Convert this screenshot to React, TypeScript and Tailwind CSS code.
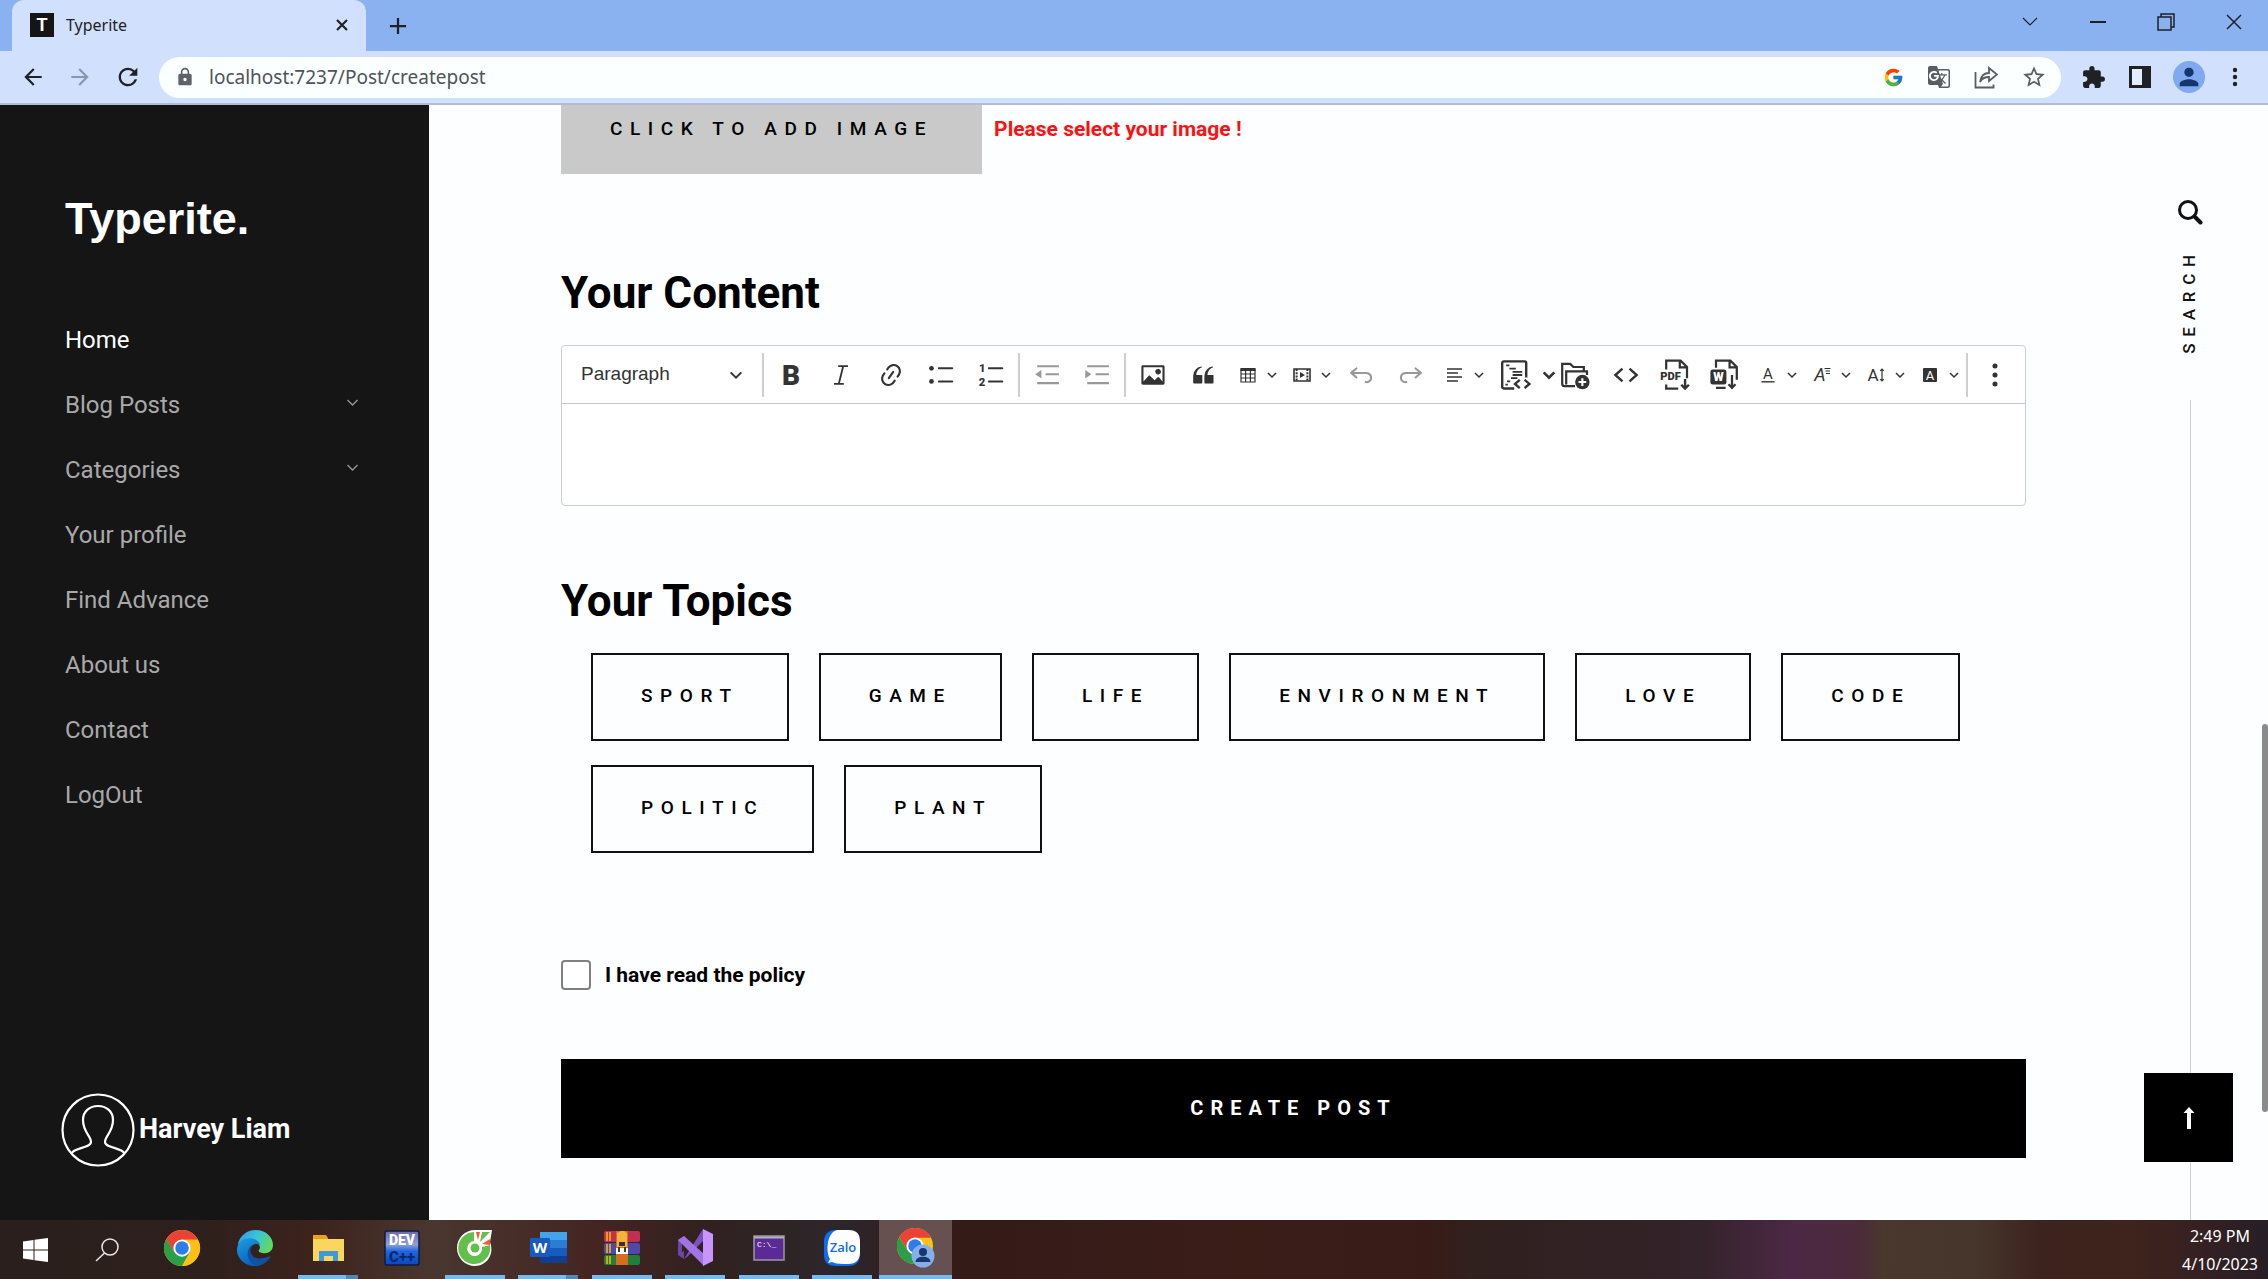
import React from "react";
import { FcGoogle } from "react-icons/fc";
import { MdArrowBack, MdArrowForward, MdExtension, MdGTranslate, MdLock, MdPerson, MdRefresh, MdStarBorder } from "react-icons/md";

type SvgProps = { size?: number; children: React.ReactNode; box?: string };

const Svg = ({ size = 28, box = "0 0 20 20", children }: SvgProps) => (
  <svg width={size} height={size} viewBox={box} fill="currentColor" aria-hidden="true" className="shrink-0 overflow-visible">
    {children}
  </svg>
);

const Chevron = ({ size = 12, width = 2 }: { size?: number; width?: number }) => (
  <svg width={size} height={size} viewBox="0 0 12 12" fill="none" stroke="currentColor" strokeWidth={width} aria-hidden="true" className="shrink-0">
    <path d="M2 4l4 4 4-4" />
  </svg>
);

/* ---------- editor toolbar icons ---------- */

const BoldIcon = () => (
  <Svg>
    <text x="10" y="17" textAnchor="middle" fontSize="20" fontWeight="900" fontFamily="Roboto, sans-serif">B</text>
  </Svg>
);
const ItalicIcon = () => (
  <Svg>
    <path d="M8 3.6h7M5 16.4h7M11.6 3.6L8.4 16.4" fill="none" stroke="currentColor" strokeWidth="1.3" />
  </Svg>
);
const LinkIcon = () => (
  <Svg>
    <path d="m11.077 15 .991-1.416a.75.75 0 1 1 1.229.86l-1.148 1.64a.748.748 0 0 1-.217.206 5.251 5.251 0 0 1-8.503-5.955.741.741 0 0 1 .12-.274l1.147-1.639a.75.75 0 1 1 1.228.86L4.933 10.7l.006.003a3.75 3.75 0 0 0 6.132 4.294l.006.004zm5.494-5.335a.748.748 0 0 1-.12.274l-1.147 1.639a.75.75 0 1 1-1.228-.86l.86-1.23a3.75 3.75 0 0 0-6.144-4.301l-.86 1.229a.75.75 0 0 1-1.229-.86l1.148-1.64a.748.748 0 0 1 .217-.206 5.251 5.251 0 0 1 8.503 5.955zm-4.563-2.532a.75.75 0 0 1 .184 1.045l-3.155 4.505a.75.75 0 1 1-1.229-.86l3.155-4.506a.75.75 0 0 1 1.045-.184z" />
  </Svg>
);
const BulletsIcon = () => (
  <Svg>
    <path d="M8.5 5.2h9.5M8.5 14.6h9.5" stroke="currentColor" strokeWidth="1.5" strokeLinecap="round" />
    <circle cx="3.2" cy="5.2" r="1.7" />
    <circle cx="3.2" cy="14.6" r="1.7" />
  </Svg>
);
const NumbersIcon = () => (
  <Svg>
    <path d="M8.5 5.2h9.5M8.5 14.6h9.5" stroke="currentColor" strokeWidth="1.5" strokeLinecap="round" />
    <text x="1.5" y="7.9" fontSize="8" fontWeight="900" fontFamily="Roboto, sans-serif">1</text>
    <text x="1.2" y="17.6" fontSize="8" fontWeight="900" fontFamily="Roboto, sans-serif">2</text>
  </Svg>
);
const OutdentIcon = () => (
  <Svg>
    <path d="M3 3.8h15.5M9 9.5h9.5M3 15.8h15.5" stroke="currentColor" strokeWidth="1.5" />
    <path d="M6 6.5v6L1.6 9.5z" />
  </Svg>
);
const IndentIcon = () => (
  <Svg>
    <path d="M3 3.8h15.5M9 9.5h9.5M3 15.8h15.5" stroke="currentColor" strokeWidth="1.5" />
    <path d="M1.6 6.5v6L6 9.5z" />
  </Svg>
);
const ImageIcon = () => (
  <Svg>
    <path d="M6.91 10.54c.26-.23.64-.21.88.03l3.36 3.14 2.23-2.06a.64.64 0 0 1 .87 0l2.52 2.97V4.5H3.2v10.12l3.71-4.08zm10.27-7.51c.6 0 1.09.47 1.09 1.05v11.84c0 .59-.49 1.06-1.09 1.06H2.79c-.6 0-1.09-.47-1.09-1.06V4.08c0-.58.49-1.05 1.1-1.05h14.38zm-5.22 5.56a1.96 1.96 0 1 1 3.4-1.96 1.96 1.96 0 0 1-3.4 1.96z" />
  </Svg>
);
const QuoteIcon = () => (
  <Svg>
    <path d="M3 10.423a6.5 6.5 0 0 1 6.056-6.408l.038.67C6.448 5.423 5.354 7.663 5.22 10H9c.552 0 .5.432.5.986v4.511c0 .554-.448.503-1 .503h-5c-.552 0-.5-.449-.5-1.003v-4.574zm8 0a6.5 6.5 0 0 1 6.056-6.408l.038.67c-2.646.739-3.74 2.979-3.873 5.315H17c.552 0 .5.432.5.986v4.511c0 .554-.448.503-1 .503h-5c-.552 0-.5-.449-.5-1.003v-4.574z" />
  </Svg>
);
const TableIcon = () => (
  <Svg size={20}>
    <path d="M3 5h14v12H3zM3 9h14M3 13h14M7.6 5v12M12.4 5v12" fill="none" stroke="currentColor" strokeWidth="1.2" />
    <path d="M2.4 3h15.2v3H2.4z" />
  </Svg>
);
const MediaIcon = () => (
  <Svg size={20}>
    <path d="M2 4h16v12H2z" fill="none" stroke="currentColor" strokeWidth="1.6" />
    <path d="M4.6 4v12M15.4 4v12" stroke="currentColor" strokeWidth="2" strokeDasharray="2 1.2" />
    <path d="M8 7v6l5-3z" />
  </Svg>
);
const undoPath =
  "m5.042 9.367 2.189 1.837a.75.75 0 0 1-.965 1.149l-3.788-3.18a.747.747 0 0 1-.21-.284.75.75 0 0 1 .17-.945L6.23 4.762a.75.75 0 1 1 .964 1.15L4.863 7.866h8.917A.75.75 0 0 1 14 7.9a4 4 0 1 1-1.477 7.718l.344-1.489a2.5 2.5 0 1 0 1.094-4.73l.008-.032H5.042z";
const UndoIcon = () => (
  <Svg>
    <path d={undoPath} />
  </Svg>
);
const RedoIcon = () => (
  <Svg>
    <path d={undoPath} transform="matrix(-1 0 0 1 20 0)" />
  </Svg>
);
const AlignIcon = () => (
  <Svg size={20}>
    <path d="M2 4h15M2 8h11M2 12h15M2 16h11" stroke="currentColor" strokeWidth="1.5" />
  </Svg>
);
const TemplateIcon = () => (
  <Svg size={32}>
    <path d="M9.5 18.4H3a1 1 0 0 1-1-1V2.500a1 1 0 0 1 1-1h13a1 1 0 0 1 1 1v9" fill="none" stroke="currentColor" strokeWidth="1.5" />
    <path d="M4.500 4h2M6.500 6h4M8.500 8h6M8.500 10h6M7.500 12h4M5 14h2M4 16h1.500" stroke="currentColor" strokeWidth="1.100" />
    <path d="M13 13l-3 2.600 3 2.600M16 13l3 2.600-3 2.600" fill="none" stroke="currentColor" strokeWidth="1.500" />
  </Svg>
);
const FolderPlusIcon = () => (
  <Svg size={32}>
    <path d="M10 17H3.500A1.500 1.500 0 0 1 2 15.500V3h5l2 2h6.500v3M4.500 16V7.700H17.500V10" fill="none" stroke="currentColor" strokeWidth="1.400" />
    <circle cx="14.600" cy="14.400" r="4.500" />
    <path d="M14.600 12v4.800M12.200 14.400H17" stroke="#fff" strokeWidth="1.300" />
  </Svg>
);
const SourceIcon = () => (
  <Svg>
    <path d="M7.500 5.500L2.400 10l5.100 4.500M12.500 5.500l5.100 4.500-5.100 4.500" fill="none" stroke="currentColor" strokeWidth="1.700" />
  </Svg>
);
const PdfIcon = () => (
  <Svg size={32}>
    <path d="M4.500 6.500V1h9l4 4V12M13 1.200v4h4.500M4.500 16v2.500h7.500" fill="none" stroke="currentColor" strokeWidth="1.400" />
    <path d="M16.300 12.500v6M13.900 16.100l2.400 2.400 2.400-2.400" fill="none" stroke="currentColor" strokeWidth="1.500" />
    <text x="0.800" y="13.200" fontSize="7" fontWeight="900" fontFamily="Roboto, sans-serif">PDF</text>
  </Svg>
);
const WordIcon = () => (
  <Svg size={32}>
    <path d="M5 5.500V1h9l4 4V13M13.500 1.200v4H18M5 18h6" fill="none" stroke="currentColor" strokeWidth="1.400" />
    <path d="M15 10v8M12.800 15.800L15 18l2.200-2.200" fill="none" stroke="currentColor" strokeWidth="1.400" />
    <rect x="1.500" y="6.500" width="10" height="9.500" rx="1.500" />
    <text x="6.500" y="14" textAnchor="middle" fontSize="7.500" fontWeight="900" fontFamily="Roboto, sans-serif" fill="#fff">W</text>
  </Svg>
);
const FontColorIcon = () => (
  <Svg size={20}>
    <text x="10" y="13.500" textAnchor="middle" fontSize="15" fontFamily="Roboto, sans-serif">A</text>
    <path d="M3.500 16.800h13" stroke="currentColor" strokeWidth="1.400" />
  </Svg>
);
const FontFamilyIcon = () => (
  <Svg size={20}>
    <text x="8" y="16" textAnchor="middle" fontSize="18" fontStyle="italic" fontFamily="Roboto, sans-serif">A</text>
    <path d="M12.500 3.500h6M13.500 6h4.500M14 8.500h4" stroke="currentColor" strokeWidth="1.200" />
  </Svg>
);
const FontSizeIcon = () => (
  <Svg size={20}>
    <text x="7" y="16" textAnchor="middle" fontSize="17" fontFamily="Roboto, sans-serif">A</text>
    <path d="M16 5v10M14.200 5.800L16 4l1.800 1.800M14.200 14.200L16 16l1.800-1.800" fill="none" stroke="currentColor" strokeWidth="1.200" />
  </Svg>
);
const HighlightIcon = () => (
  <Svg size={20}>
    <rect x="3" y="3" width="14" height="14" rx="1" />
    <text x="10" y="14.500" textAnchor="middle" fontSize="13" fontFamily="Roboto, sans-serif" fill="#fff">A</text>
  </Svg>
);
const DotsIcon = () => (
  <Svg>
    <circle cx="10" cy="3.600" r="1.800" />
    <circle cx="10" cy="10" r="1.800" />
    <circle cx="10" cy="16.400" r="1.800" />
  </Svg>
);

const Tool = ({ label, wide, muted, children }: { label: string; wide?: boolean; muted?: boolean; children: React.ReactNode }) => (
  <button
    type="button"
    aria-label={label}
    className={`flex h-12 shrink-0 items-center justify-center ${wide ? "w-[50px]" : "w-[49px]"} ${muted ? "text-[#999]" : "text-[#333]"}`}
  >
    {children}
  </button>
);
const DropTool = ({ label, children }: { label: string; children: React.ReactNode }) => (
  <button type="button" aria-label={label} className="flex h-12 w-[54px] shrink-0 items-center gap-2 pl-[10px] text-[#333]">
    {children}
    <Chevron width={1.5} />
  </button>
);
const Separator = () => <span className="mx-[2px] h-11 w-[2px] shrink-0 bg-[#ccced1]" />;

/* ---------- taskbar icons ---------- */

const ChromeLogo = ({ size = 36 }: { size?: number }) => (
  <Svg size={size} box="0 0 48 48">
    <circle cx="24" cy="24" r="24" fill="#fbc116" />
    <path d="M3.200 12A24 24 0 0 1 44.800 12L45 13H24L13.600 30z" fill="#ea4335" />
    <path d="M3.200 12A24 24 0 0 0 24 48L34.400 30 24 24 13.600 30z" fill="#2b9e48" />
    <path d="M44.800 12A24 24 0 0 1 24 48L34.400 30 35 20 24 13H45z" fill="#fbc116" />
    <circle cx="24" cy="24" r="11.500" fill="#fff" />
    <circle cx="24" cy="24" r="9" fill="#2b7de9" />
  </Svg>
);
const EdgeLogo = () => (
  <Svg size={36} box="0 0 48 48">
    <defs>
      <linearGradient id="edgeTop" x1="0" y1="0.200" x2="1" y2="0.600">
        <stop offset="0" stopColor="#2f9be8" />
        <stop offset="0.500" stopColor="#38c6d8" />
        <stop offset="1" stopColor="#62dc55" />
      </linearGradient>
      <linearGradient id="edgeLow" x1="0" y1="0" x2="0.500" y2="1">
        <stop offset="0" stopColor="#1f9de0" />
        <stop offset="1" stopColor="#0a62c0" />
      </linearGradient>
    </defs>
    <path d="M1 20C3 8 13 0 25 0c13 0 23 9 23 20 0 7-5 11-11 11-5 0-9-2-8-4 2-2 2-4 1-6C27 13 10 10 1 20z" fill="url(#edgeTop)" />
    <path d="M0 25C1 15 9 11 17 11c7 0 13 4 14 9-3-2-8-2-11 1-7 8-2 23 10 26-2 1-4 1-6 1C10 48-1 37 0 25z" fill="url(#edgeLow)" />
    <path d="M20 19c-5 8-1 19 9 19 6 0 11-2 15-3 1 0 1 1 0 2-4 6-10 10-17 11-12-2-18-19-7-29z" fill="#0d54a0" />
  </Svg>
);
const FolderLogo = () => (
  <Svg size={34} box="0 0 34 34">
    <path d="M2 4h13l2 3v6H2z" fill="#e8a317" />
    <path d="M2 8h31v22H2z" fill="#fcd65c" />
    <path d="M8 20h19v10h-5v-5h-9v5H8z" fill="#3f97dc" />
  </Svg>
);
const DevLogo = () => (
  <Svg size={36} box="0 0 36 36">
    <defs>
      <linearGradient id="dev" x1="0" y1="0" x2="0" y2="1">
        <stop offset="0" stopColor="#6a68ae" />
        <stop offset="0.400" stopColor="#8fa0dd" />
        <stop offset="0.600" stopColor="#1f66dd" />
        <stop offset="1" stopColor="#0a47c0" />
      </linearGradient>
    </defs>
    <rect x="1" y="1" width="34" height="34" rx="2" fill="url(#dev)" stroke="#0f1c3d" strokeWidth="1.500" />
    <text x="18" y="15" textAnchor="middle" fontSize="14" fontWeight="900" fontFamily="Roboto, sans-serif" fill="#fff">DEV</text>
    <text x="18" y="32" textAnchor="middle" fontSize="15" fontWeight="900" fontFamily="Roboto, sans-serif" fill="#0b2a6b">C++</text>
  </Svg>
);
const CocCocLogo = () => (
  <Svg size={38} box="0 0 38 38">
    <path d="M36 1l-2 12c5 13-4 24-15 24C9 37 1 29 1 19S9 1 19 1z" fill="#fff" />
    <path d="M18 3a16 16 0 1 0 16 13l-8 2a7.500 7.500 0 1 1-8-6z" fill="#63bf4b" />
    <circle cx="19" cy="19" r="4.500" fill="#63bf4b" />
    <path d="M20 3h4l-2 8z" fill="#f0593e" />
    <path d="M26 3h8l-10 10z" fill="#63bf4b" />
    <path d="M26 15l8-5v6z" fill="#f0593e" />
  </Svg>
);
const WordLogo = () => (
  <Svg size={37} box="0 0 37 37">
    <path d="M10 3h27v8H10z" fill="#41a5ee" />
    <path d="M10 11h27v8H10z" fill="#2b7cd3" />
    <path d="M10 19h27v8H10z" fill="#185abd" />
    <path d="M10 27h27v7H10z" fill="#103f91" />
    <rect x="0" y="9" width="20" height="19" rx="1" fill="#185abd" />
    <text x="10" y="24" textAnchor="middle" fontSize="15" fontWeight="700" fontFamily="Open Sans, sans-serif" fill="#fff">W</text>
  </Svg>
);
const WinrarLogo = () => (
  <Svg size={36} box="0 0 36 36">
    <rect x="0" y="1" width="36" height="11" rx="2" fill="#c22f55" />
    <rect x="0" y="13" width="36" height="11" rx="2" fill="#4f49ad" />
    <rect x="0" y="25" width="36" height="10" rx="2" fill="#1f7f3c" />
    <path d="M3 2v9M6 2v9M3 14v9M6 14v9M3 26v8M6 26v8" stroke="#f2b705" strokeWidth="1.600" />
    <rect x="12" y="1" width="12" height="34" fill="#d86d20" />
    <path d="M13 3l4-2h3l3 2v14H13z" fill="#f2b33a" />
    <path d="M15 12h6v4h-6z" fill="#333" />
    <path d="M12 18h12v6H12z" fill="#fff" />
    <path d="M15 17v5M21 17v5" stroke="#5a3010" strokeWidth="2" />
  </Svg>
);
const VisualStudioLogo = () => (
  <Svg size={37} box="0 0 37 37">
    <path d="M1 11l6-4v23l-6-4z" fill="#6b46a6" />
    <path d="M5 13.500v10l5-5z" fill="#2f2324" />
    <path d="M7 30L26 0v12L10 28z" fill="#7c50c0" />
    <path d="M7 7L27 25v12L1 11z" fill="#a273e4" />
    <path d="M26 0l10 5v27l-10 5z" fill="#c795fb" />
  </Svg>
);
const TerminalLogo = () => (
  <Svg size={32} box="0 0 32 32">
    <rect x="1" y="4" width="30" height="24" fill="#5b2a97" stroke="#9a9a9a" strokeWidth="1.500" />
    <path d="M1 5.500h30" stroke="#b5b5b5" strokeWidth="2" />
    <text x="4" y="15" fontSize="8" fontFamily="Liberation Mono, monospace" fill="#fff">C:\_</text>
  </Svg>
);
const ZaloLogo = () => (
  <Svg size={38} box="0 0 38 38">
    <path d="M13 1h12c9 0 12 4 12 12v12c0 8-4 12-12 12H13C4 37 1 33 1 25V13C1 5 5 1 13 1z" fill="#0f6cf2" />
    <path d="M14 1h11c9 0 12 4 12 12v10c0 8-4 12-12 12-6 0-12 0-16-2l-4 1 2-4C3 24 3 4 14 1z" fill="#fff" />
    <text x="20" y="22.500" textAnchor="middle" fontSize="13" fontWeight="600" fontFamily="Open Sans, sans-serif" fill="#0f6cf2">Zalo</text>
  </Svg>
);
const ChromeProfileLogo = () => (
  <Svg size={40} box="0 0 40 40">
    <g transform="translate(2 0) scale(0.750)">
      <circle cx="24" cy="24" r="24" fill="#fbc116" />
      <path d="M3.200 12A24 24 0 0 1 44.800 12L45 13H24L13.600 30z" fill="#ea4335" />
      <path d="M3.200 12A24 24 0 0 0 24 48L34.400 30 24 24 13.600 30z" fill="#2b9e48" />
      <circle cx="24" cy="24" r="11.500" fill="#fff" />
      <circle cx="24" cy="24" r="9" fill="#2b7de9" />
    </g>
    <circle cx="28" cy="28" r="11.500" fill="#86aeea" />
    <circle cx="28" cy="24" r="4" fill="#17386e" />
    <path d="M20.500 34c0-7 15-7 15 0z" fill="#17386e" />
  </Svg>
);

const taskbarApps: { name: string; icon: React.ReactNode; open?: boolean; stacked?: boolean; active?: boolean }[] = [
  { name: "Chrome", icon: <ChromeLogo /> },
  { name: "Edge", icon: <EdgeLogo /> },
  { name: "File Explorer", icon: <FolderLogo />, open: true, stacked: true },
  { name: "Dev-C++", icon: <DevLogo /> },
  { name: "Coc Coc", icon: <CocCocLogo />, open: true },
  { name: "Word", icon: <WordLogo />, open: true, stacked: true },
  { name: "WinRAR", icon: <WinrarLogo />, open: true },
  { name: "Visual Studio", icon: <VisualStudioLogo />, open: true },
  { name: "Terminal", icon: <TerminalLogo />, open: true },
  { name: "Zalo", icon: <ZaloLogo />, open: true },
  { name: "Chrome profile", icon: <ChromeProfileLogo />, open: true, active: true },
];

const navItems = [
  { label: "Home", current: true },
  { label: "Blog Posts", menu: true },
  { label: "Categories", menu: true },
  { label: "Your profile" },
  { label: "Find Advance" },
  { label: "About us" },
  { label: "Contact" },
  { label: "LogOut" },
];

const topics = ["Sport", "Game", "Life", "Environment", "Love", "Code", "Politic", "Plant"];

function BrowserChrome() {
  return (
    <header className="shrink-0 font-['Noto_Sans',sans-serif] text-[#1f2124]">
      <div className="flex h-[51px] items-stretch bg-[#8ab1f0] pl-3">
        <div className="flex w-[354px] items-center rounded-t-xl bg-[#d1e1fd] pr-4 pb-[2px] pl-[18px]">
          <span className="flex size-6 items-center justify-center bg-[#151515] font-['Liberation_Sans',sans-serif] text-lg font-bold text-white">T</span>
          <span className="ml-3 flex-1 text-base">Typerite</span>
          <button type="button" aria-label="Close tab">
            <svg width="16" height="16" viewBox="0 0 16 16" stroke="currentColor" strokeWidth="2.200" aria-hidden="true">
              <path d="M3 3l10 10M13 3L3 13" />
            </svg>
          </button>
        </div>
        <button type="button" aria-label="New tab" className="ml-5 flex w-6 items-center justify-center">
          <svg width="18" height="18" viewBox="0 0 20 20" stroke="currentColor" strokeWidth="2.500" aria-hidden="true">
            <path d="M10 1v18M1 10h18" />
          </svg>
        </button>
        <div className="ml-auto flex items-center pb-2">
          <button type="button" aria-label="Search tabs" className="flex w-[68px] justify-center">
            <svg width="16" height="10" viewBox="0 0 16 10" fill="none" stroke="currentColor" strokeWidth="1.200" aria-hidden="true">
              <path d="M1 1l7 7 7-7" />
            </svg>
          </button>
          <button type="button" aria-label="Minimize" className="flex w-[68px] justify-center">
            <svg width="16" height="16" viewBox="0 0 16 16" stroke="currentColor" strokeWidth="2" aria-hidden="true">
              <path d="M0 8h16" />
            </svg>
          </button>
          <button type="button" aria-label="Restore" className="flex w-[68px] justify-center">
            <svg width="18" height="18" viewBox="0 0 18 18" fill="none" stroke="currentColor" strokeWidth="1.500" aria-hidden="true">
              <path d="M1 4h13v13H1zM4 4V1h13v13h-3" />
            </svg>
          </button>
          <button type="button" aria-label="Close window" className="flex w-[68px] justify-center">
            <svg width="16" height="16" viewBox="0 0 16 16" stroke="currentColor" strokeWidth="1.500" aria-hidden="true">
              <path d="M1 1l14 14M15 1L1 15" />
            </svg>
          </button>
        </div>
      </div>
      <div className="flex h-[54px] items-center border-b-2 border-[#aebcd6] bg-[#d1e1fd] pl-5">
        <button type="button" aria-label="Back" className="flex w-[47px]"><MdArrowBack size={26} /></button>
        <button type="button" aria-label="Forward" className="flex w-[47px] text-[#8a96ac]"><MdArrowForward size={26} /></button>
        <button type="button" aria-label="Reload" className="flex w-[45px]"><MdRefresh size={28} /></button>
        <div className="flex h-[41px] flex-1 items-center rounded-full bg-[#fbffff] pr-[14px] pl-4">
          <MdLock size={20} className="text-[#5f6368]" />
          <input aria-label="Address" defaultValue="localhost:7237/Post/createpost" className="ml-[14px] flex-1 bg-transparent text-[19px] text-[#505357] outline-none" />
          <div className="flex items-center gap-[23px] text-[#5a5d61]">
            <FcGoogle size={21} />
            <MdGTranslate size={24} />
            <svg width="24" height="24" viewBox="0 0 24 24" fill="none" stroke="currentColor" strokeWidth="1.800" aria-hidden="true">
              <path d="M1.500 7v15.500h18v-3" />
              <path d="M6 17c1-7 4-9 9-9V3l8 6.500-8 6.500v-4c-4 0-7 1-9 5z" />
            </svg>
            <MdStarBorder size={26} />
          </div>
        </div>
        <div className="flex items-center pr-[23px] pl-5">
          <button type="button" aria-label="Extensions" className="flex w-[48px]"><MdExtension size={25} /></button>
          <button type="button" aria-label="Side panel" className="flex w-[44px]">
            <svg width="22" height="22" viewBox="0 0 22 22" aria-hidden="true">
              <path d="M1.500 1.500h19v19h-19z" fill="#e3ecfc" stroke="currentColor" strokeWidth="3" />
              <path d="M13 1h8v20h-8z" fill="currentColor" />
            </svg>
          </button>
          <button type="button" aria-label="Profile" className="flex size-8 items-center justify-center rounded-full bg-[#80aaf0] text-[#15356b]"><MdPerson size={28} /></button>
          <button type="button" aria-label="Chrome menu" className="ml-5 flex">
            <svg width="20" height="20" viewBox="0 0 20 20" fill="currentColor" aria-hidden="true">
              <circle cx="10" cy="3" r="2.200" /><circle cx="10" cy="10" r="2.200" /><circle cx="10" cy="17" r="2.200" />
            </svg>
          </button>
        </div>
      </div>
    </header>
  );
}

function Sidebar() {
  return (
    <aside className="flex w-[429px] shrink-0 flex-col bg-[#151515] pt-[84px] pb-[53px] pl-[65px] text-white">
      <a href="#top" className="font-['Liberation_Sans',sans-serif] text-[45px] leading-[60px] font-bold">Typerite.</a>
      <nav className="mt-[58px]">
        <ul>
          {navItems.map((item) => (
            <li key={item.label} className="flex h-[65px] items-center justify-between pr-[69px]">
              <a href="#top" className={`text-2xl ${item.current ? "text-white" : "text-[#a9a9a9]"}`}>{item.label}</a>
              {item.menu && <span className="pb-1 text-[#999]"><Chevron size={15} width={1} /></span>}
            </li>
          ))}
        </ul>
      </nav>
      <div className="mt-auto -ml-1 flex items-center gap-1">
        <svg width="74" height="74" viewBox="0 0 74 74" fill="none" stroke="#fff" strokeWidth="2.200" aria-hidden="true">
          <circle cx="37" cy="37" r="35.500" />
          <path d="M11 60c1-5 19-5 19-11 0-6-8-10-8-22 0-9 7-14 15-14s15 5 15 14c0 12-8 16-8 22 0 6 18 6 19 11" />
        </svg>
        <span className="pb-[2px] text-[27px] leading-8 font-bold">Harvey Liam</span>
      </div>
    </aside>
  );
}

function Editor() {
  return (
    <div className="mt-[27px] rounded-sm border border-[#ccced1] bg-white">
      <div className="flex h-[58px] items-center overflow-hidden border-b border-[#c4c6c9] text-[#333]">
        <button type="button" className="flex h-12 w-[198px] shrink-0 items-center justify-between pr-4 pl-[19px] font-['Liberation_Sans',sans-serif] text-[19px]">
          Paragraph
          <Chevron size={16} width={1.5} />
        </button>
        <Separator />
        <Tool label="Bold" wide><BoldIcon /></Tool>
        <Tool label="Italic" wide><ItalicIcon /></Tool>
        <Tool label="Link" wide><LinkIcon /></Tool>
        <Tool label="Bulleted List" wide><BulletsIcon /></Tool>
        <Tool label="Numbered List" wide><NumbersIcon /></Tool>
        <Separator />
        <Tool label="Decrease indent" wide muted><OutdentIcon /></Tool>
        <Tool label="Increase indent" wide muted><IndentIcon /></Tool>
        <Separator />
        <Tool label="Insert image" wide><ImageIcon /></Tool>
        <Tool label="Block quote" wide><QuoteIcon /></Tool>
        <DropTool label="Insert table"><TableIcon /></DropTool>
        <DropTool label="Insert media"><MediaIcon /></DropTool>
        <Tool label="Undo" muted wide><UndoIcon /></Tool>
        <Tool label="Redo" muted><RedoIcon /></Tool>
        <DropTool label="Text alignment"><AlignIcon /></DropTool>
        <button type="button" aria-label="Insert template" className="flex h-12 w-[68px] shrink-0 items-center justify-between pl-[10px]">
          <TemplateIcon />
          <Chevron size={16} width={2} />
        </button>
        <button type="button" aria-label="File manager" className="flex h-12 w-[44px] shrink-0 items-center pl-[2px]"><FolderPlusIcon /></button>
        <Tool label="Source"><SourceIcon /></Tool>
        <Tool label="Export to PDF"><PdfIcon /></Tool>
        <Tool label="Export to Word"><WordIcon /></Tool>
        <DropTool label="Font Color"><FontColorIcon /></DropTool>
        <DropTool label="Font Family"><FontFamilyIcon /></DropTool>
        <DropTool label="Font Size"><FontSizeIcon /></DropTool>
        <DropTool label="Font Background Color"><HighlightIcon /></DropTool>
        <Separator />
        <Tool label="Show more items" wide><DotsIcon /></Tool>
      </div>
      <textarea aria-label="Your Content" className="block h-[101px] w-full resize-none p-4 outline-none" />
    </div>
  );
}

function PostForm() {
  return (
    <form className="min-w-0 flex-1 pl-[132px] pr-[92px]" onSubmit={(event) => event.preventDefault()}>
      <div className="flex items-start gap-3">
        <button type="button" className="h-[69px] bg-[#c9c9c9] px-[49px] pb-[21px] text-[19px] font-medium tracking-[0.4em] uppercase">
          Click to add image
        </button>
        <p className="pt-2 text-[21px] leading-8 font-bold text-[#ff1010]">Please select your image !</p>
      </div>

      <h2 className="mt-[94px] text-[44px] leading-[50px] font-bold">Your Content</h2>
      <Editor />

      <h2 className="mt-[70px] text-[44px] leading-[50px] font-bold">Your Topics</h2>
      <div className="mt-[27px] flex flex-wrap gap-x-[30px] gap-y-6 pl-[30px]">
        {topics.map((topic) => (
          <button key={topic} type="button" className="h-[88px] border-2 border-[#111] px-12 pb-[2px] text-[19px] font-medium tracking-[0.4em] uppercase">
            {topic}
          </button>
        ))}
      </div>

      <label className="mt-[107px] flex w-fit items-center gap-[14px] text-[21px] leading-[30px] font-bold">
        <input type="checkbox" className="size-[30px] appearance-none rounded-[4px] border-2 border-[#808080] bg-white" />
        I have read the policy
      </label>

      <button type="submit" className="mt-[69px] h-[99px] w-full bg-black pb-[2px] text-xl font-bold tracking-[0.35em] text-white uppercase">
        Create post
      </button>
    </form>
  );
}

function SearchRail() {
  return (
    <aside className="relative flex w-[144px] shrink-0 flex-col items-center">
      <button type="button" className="mt-[94px] flex flex-col items-center gap-[23px] text-[#111]">
        <svg width="26" height="26" viewBox="0 0 26 26" fill="none" stroke="currentColor" aria-hidden="true">
          <circle cx="11" cy="11" r="8.500" strokeWidth="3" />
          <path d="M17.500 17.500l6 6" strokeWidth="4" strokeLinecap="round" />
        </svg>
        <span className="rotate-180 text-[17px] font-medium tracking-[0.4em] uppercase [writing-mode:vertical-rl]">Search</span>
      </button>
      <div className="mt-[46px] w-px flex-1 bg-[#d3d3d3]" />
      <a href="#top" aria-label="Back to top" className="absolute right-[29px] bottom-[58px] flex size-[89px] items-center justify-center bg-black">
        <svg width="12" height="22" viewBox="0 0 12 22" fill="#fff" aria-hidden="true">
          <path d="M6 0l5.500 6H8v16H4V6H.500z" />
        </svg>
      </a>
    </aside>
  );
}

function Taskbar() {
  return (
    <footer className="flex h-[59px] shrink-0 items-stretch bg-[linear-gradient(90deg,#2a1f1d_0%,#2e201c_9%,#3d231c_14%,#49372f_19%,#452522_26%,#31211f_31%,#2c262b_37%,#341a18_42%,#3b1d18_55%,#381b17_63%,#30211f_65%,#33232a_75%,#4c2845_79%,#4c2a3a_82%,#4a372d_83%,#46362c_87%,#3d231d_90%,#3f231c_94%,#352022_97%,#261f26_100%)] font-['Noto_Sans',sans-serif] text-white">
      <button type="button" aria-label="Start" className="flex w-[71px] items-center justify-center">
        <svg width="25" height="24" viewBox="0 0 25 24" fill="#fff" aria-hidden="true">
          <path d="M0 3.400l10.500-1.500v9.600H0zM11.500 1.700L25 0v11.500H11.500zM0 12.500h10.500v9.600L0 20.600zM11.500 12.500H25V24l-13.500-1.700z" />
        </svg>
      </button>
      <button type="button" aria-label="Search" className="flex w-[74px] items-center pl-6">
        <svg width="24" height="24" viewBox="0 0 24 24" fill="none" stroke="#e8e8e8" strokeWidth="1.500" aria-hidden="true">
          <circle cx="15" cy="9" r="8" />
          <path d="M9.500 15L1 23" />
        </svg>
      </button>
      <div className="grid w-[807px] grid-cols-11">
        {taskbarApps.map((app) => (
          <button
            key={app.name}
            type="button"
            aria-label={app.name}
            className={`grid grid-rows-[1fr_4px] justify-items-center ${app.active ? "bg-[#675150]" : ""}`}
          >
            <span className="flex items-center">{app.icon}</span>
            {app.open && (
              <span className={`flex h-1 bg-[#76b9ed] ${app.active ? "w-full" : "w-[60px]"}`}>
                {app.stacked && <span className="ml-auto w-3 bg-[#5187b5]" />}
              </span>
            )}
          </button>
        ))}
      </div>
      <div className="ml-auto flex flex-col items-end justify-center pr-[10px] text-base leading-[28px]">
        <span className="pr-2">2:49 PM</span>
        <span>4/10/2023</span>
      </div>
    </footer>
  );
}

export default function App() {
  return (
    <div className="flex h-screen flex-col overflow-hidden bg-[#fdfeff] font-['Roboto',sans-serif] text-black">
      <BrowserChrome />
      <div className="flex min-h-0 flex-1 overflow-hidden">
        <Sidebar />
        <main className="flex min-w-0 flex-1">
          <PostForm />
          <SearchRail />
        </main>
        <div className="flex w-[6px] shrink-0 flex-col">
          <div className="grow-[619]" />
          <div className="grow-[388] rounded-sm bg-[#8b8b8b]" />
          <div className="grow-[108]" />
        </div>
      </div>
      <Taskbar />
    </div>
  );
}
